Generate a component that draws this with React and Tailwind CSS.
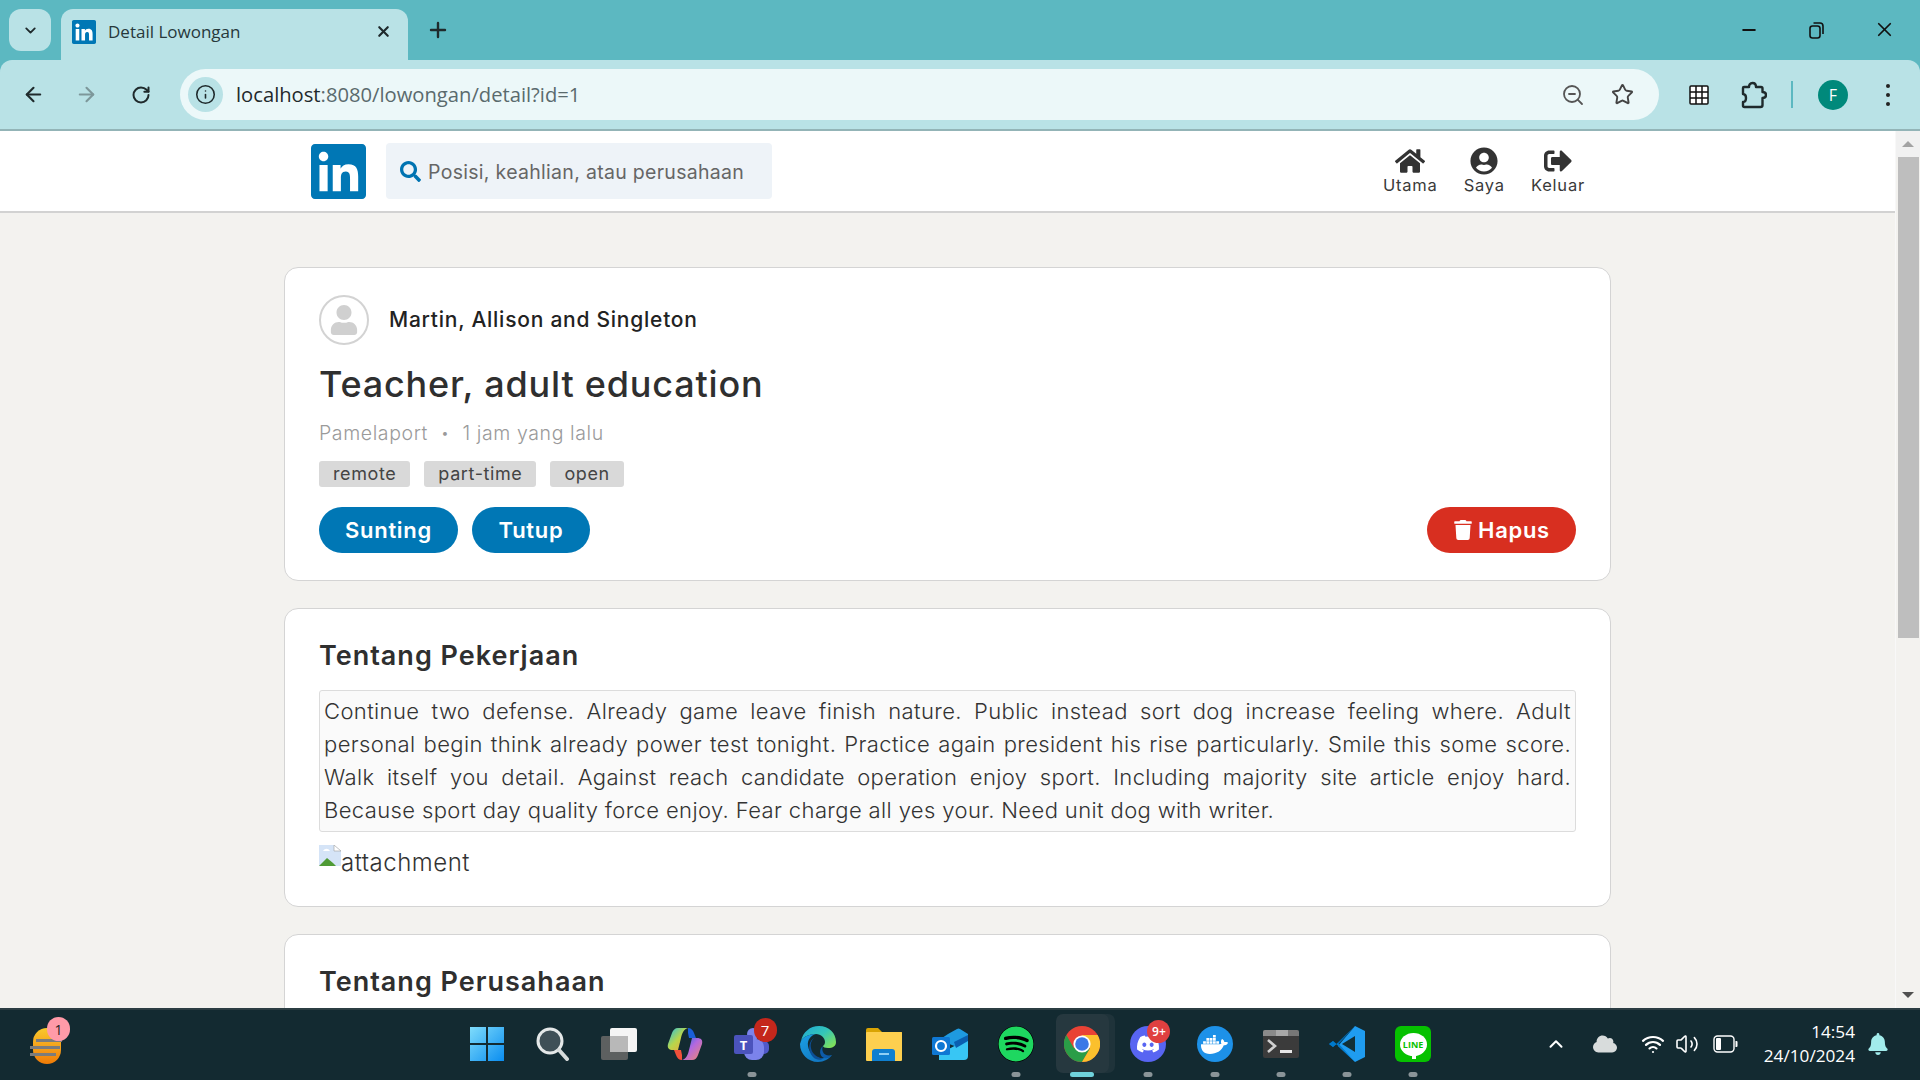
import {
  ArrowLeft, ArrowRight, RotateCw, Info, ZoomOut, Star, X, Plus, ChevronDown, ChevronUp,
  Minus, Wifi, Volume2,
} from "lucide-react";
import { FaHome, FaUserCircle, FaSignOutAlt, FaSearch, FaTrash, FaSpotify, FaDiscord, FaDocker, FaCloud, FaBell, FaUser } from "react-icons/fa";

const LINKEDIN_PATH =
  "M416 32H31.9C14.3 32 0 46.5 0 64.3v383.4C0 465.5 14.3 480 31.9 480H416c17.6 0 32-14.5 32-32.3V64.3c0-17.8-14.4-32.3-32-32.3zM135.4 416H69V202.2h66.5V416zm-33.2-243c-21.3 0-38.5-17.3-38.5-38.5S80.9 96 102.2 96c21.2 0 38.5 17.3 38.5 38.5 0 21.3-17.2 38.5-38.5 38.5zm282.1 243h-66.4V312c0-24.8-.5-56.7-34.5-56.7-34.6 0-39.9 27-39.9 54.9V416h-66.4V202.2h63.7v29.2h.9c8.9-16.8 30.6-34.5 62.9-34.5 67.2 0 79.7 44.3 79.7 101.9V416z";

function LinkedinLogo({ className }) {
  return (
    <svg viewBox="0 32 448 448" className={className} fill="#0077b5">
      <rect x="20" y="60" width="410" height="400" fill="#fff" />
      <path d={LINKEDIN_PATH} />
    </svg>
  );
}

function ExtensionIcon() {
  return (
    <svg width="26" height="28" viewBox="0 0 26 28" fill="none" stroke="#1f2a2c" strokeWidth="2.4" strokeLinejoin="round" className="ml-[32px] shrink-0">
      <path d="M3 6h5c0-2 1-4 3.500-4S15 4 15 6h5a1.500 1.500 0 0 1 1.500 1.500V11c2.500 0 3.500 1 3.500 3s-1 3-3.500 3v7a2 2 0 0 1-2 2H3.500a1.500 1.500 0 0 1-1.500-1.500V21c2 0 3-1.500 3-4s-1-4-3-4V7a1 1 0 0 1 1-1z" />
    </svg>
  );
}

function ChromeBar() {
  return (
    <div className="h-[131px] shrink-0 bg-[#5cb8c1] text-[#1f2a2c] font-['Open_Sans',sans-serif]">
      {/* tab strip */}
      <div className="h-[60px] flex items-start pl-[9px] pt-[9px]">
        <div className="w-[42px] h-[42px] rounded-[12px] bg-[#b9e2e6] flex items-center justify-center">
          <ChevronDown size={17} strokeWidth={2.6} />
        </div>
        <div className="ml-[10px] w-[347px] h-[51px] rounded-t-[12px] bg-[#b9e2e6] flex items-center pl-[11px] pr-[16px] pb-[6px]">
          <LinkedinLogo className="w-[24px] h-[24px]" />
          <span className="ml-[12px] text-[17px] flex-1 leading-none text-[#27383b]">Detail Lowongan</span>
          <X size={17} strokeWidth={3} />
        </div>
        <Plus size={24} strokeWidth={2.4} className="ml-[18px] mt-[9px]" />
        <div className="ml-auto flex items-center mt-[9px] pr-[24px] gap-[49px]">
          <Minus size={20} strokeWidth={2.4} className="text-[#111]" />
          <svg width="18" height="18" viewBox="0 0 18 18" fill="none" stroke="#111" strokeWidth="1.6">
            <rect x="2" y="5" width="10" height="12" rx="2.5" />
            <path d="M5.5 2h6.500a3 3 0 0 1 3 3v8" />
          </svg>
          <X size={23} strokeWidth={1.8} className="text-[#111] -ml-[2px]" />
        </div>
      </div>
      {/* toolbar */}
      <div className="h-[71px] rounded-t-[12px] bg-[#b9e2e6] border-b-2 border-[#93b4b7] flex items-center">
        <ArrowLeft size={23} strokeWidth={2.2} className="ml-[22px] shrink-0" />
        <ArrowRight size={23} strokeWidth={2.2} className="ml-[30px] shrink-0 text-[#7d979a]" />
        <RotateCw size={20} strokeWidth={2.4} className="ml-[33px] shrink-0" />
        <div className="ml-[29px] w-[1479px] h-[51px] shrink-0 rounded-full bg-[#ecf8f9] flex items-center pl-[8px] pr-[25px]">
          <div className="w-[35px] h-[35px] rounded-full bg-[#b9e2e6] flex items-center justify-center">
            <Info size={21} strokeWidth={1.8} />
          </div>
          <div className="ml-[13px] text-[20.2px] flex-1 leading-none">
            <span className="text-[#1f2a2c]">localhost</span>
            <span className="text-[#5a6a6d]">:8080/lowongan/detail?id=1</span>
          </div>
          <ZoomOut size={24} strokeWidth={1.8} className="text-[#555]" />
          <Star size={23} strokeWidth={2} className="ml-[26px] text-[#444]" />
        </div>
        <svg width="20" height="20" viewBox="0 0 20 20" className="ml-[30px] shrink-0" fill="#fff" stroke="#111" strokeWidth="1.5">
          <rect x="1" y="1" width="18" height="18" rx="1" />
          <path d="M7 1v18M13 1v18M1 7h18M1 13h18" />
        </svg>
        <ExtensionIcon />
        <div className="ml-[24px] w-[2px] h-[27px] shrink-0 bg-[#5cb8c1]" />
        <div className="ml-[25px] w-[30px] h-[30px] shrink-0 rounded-full bg-[#00897b] text-white text-[16px] flex items-center justify-center">F</div>
        <div className="ml-[38px] shrink-0 flex flex-col gap-[5px]">
          <span className="w-[4px] h-[4px] rounded-full bg-[#222]" />
          <span className="w-[4px] h-[4px] rounded-full bg-[#222]" />
          <span className="w-[4px] h-[4px] rounded-full bg-[#222]" />
        </div>
      </div>
    </div>
  );
}

function NavItem({ icon, label, className }) {
  return (
    <div className={`flex flex-col items-center text-[#333] ${className}`}>
      <div className="h-[28px] flex items-center justify-center">{icon}</div>
      <span className="text-[16.5px] leading-[20px] tracking-[0.8px] text-[#3a3a3a]">{label}</span>
    </div>
  );
}

function Nav() {
  return (
    <div className="h-[82px] shrink-0 bg-white border-b-2 border-[#d2d2d2]">
      <div className="ml-[311px] w-[1274px] h-full flex items-center">
        <LinkedinLogo className="w-[55px] h-[55px]" />
        <div className="ml-[20px] w-[386px] h-[56px] rounded-[4px] bg-[#eef3f8] flex items-center pl-[14px]">
          <FaSearch size={21} className="text-[#0073b1]" />
          <span className="ml-[7px] text-[19.5px] tracking-[0.3px] leading-[30px] mt-[2px] text-[#666]">Posisi, keahlian, atau perusahaan</span>
        </div>
        <NavItem className="ml-auto" label="Utama" icon={<FaHome size={30} />} />
        <NavItem className="ml-[26px]" label="Saya" icon={<FaUserCircle size={28} />} />
        <NavItem className="ml-[26px]" label="Keluar" icon={<FaSignOutAlt size={28} />} />
      </div>
    </div>
  );
}

function Card({ children, className }) {
  return <div className={`rounded-[14px] border border-[#d4d4d4] bg-white px-[34px] ${className}`}>{children}</div>;
}

const TAGS = ["remote", "part-time", "open"];

function PillButton({ children, className }) {
  return (
    <button className={`h-[46px] rounded-full text-white text-[22px] tracking-[0.7px] font-semibold flex items-center justify-center ${className}`}>
      {children}
    </button>
  );
}

function Scrollbar() {
  return (
    <div className="w-[25px] shrink-0 bg-[#f3f2ef] border-l border-[#f8f8f8] flex flex-col items-center">
      <div className="w-full h-[26px] bg-[#f1f1f1] flex items-center justify-center">
        <div className="w-0 h-0 border-x-[6px] border-x-transparent border-b-[6px] border-b-[#a3a3a3]" />
      </div>
      <div className="w-[21px] h-[481px] bg-[#bebebe]" />
      <div className="mt-auto h-[26px] flex items-center justify-center">
        <div className="w-0 h-0 border-x-[6px] border-x-transparent border-t-[6px] border-t-[#505050]" />
      </div>
    </div>
  );
}

function Page() {
  return (
    <div className="flex-1 min-h-0 flex overflow-hidden bg-[#f3f2ef] font-['Inter',sans-serif]">
      <div className="flex-1 min-w-0 flex flex-col">
        <Nav />
        <div className="ml-[284px] w-[1327px] pt-[54px] flex flex-col gap-[27px] text-[#2f2f2f]">
          <Card className="h-[314px] pt-[27px]">
            <div className="flex items-center">
              <div className="w-[50px] h-[50px] rounded-full border-2 border-[#d3d3d3] flex items-center justify-center overflow-hidden">
                <FaUser size={30} className="text-[#d0d0d0]" />
              </div>
              <span className="ml-[20px] text-[21px] font-medium tracking-[0.75px] text-[#222]">Martin, Allison and Singleton</span>
            </div>
            <h1 className="mt-[14px] text-[36px] leading-[50px] font-medium tracking-[0.8px]">Teacher, adult education</h1>
            <div className="mt-[10px] text-[19.5px] leading-[28px] font-light tracking-[0.6px] text-[#9a9a9a] flex items-center">
              <span>Pamelaport</span>
              <span className="mx-[13px] text-[14px]">•</span>
              <span>1 jam yang lalu</span>
            </div>
            <div className="mt-[14px] flex gap-[14px]">
              {TAGS.map((t) => (
                <span key={t} className="h-[26px] rounded-[3px] bg-[#d9d9d9] px-[14px] text-[18px] tracking-[0.6px] leading-[26px] text-[#444]">
                  {t}
                </span>
              ))}
            </div>
            <div className="mt-[20px] flex gap-[14px]">
              <PillButton className="w-[139px] bg-[#0077b5]">Sunting</PillButton>
              <PillButton className="w-[118px] bg-[#0077b5]">Tutup</PillButton>
              <PillButton className="ml-auto w-[149px] bg-[#d82f20] gap-[5px]">
                <FaTrash size={20} />
                Hapus
              </PillButton>
            </div>
          </Card>

          <Card className="h-[299px] pt-[28px]">
            <h2 className="text-[27px] leading-[38px] font-semibold tracking-[1px]">Tentang Pekerjaan</h2>
            <div className="mt-[15px] rounded-[3px] border border-[#dcdcdc] bg-[#fafafa] px-[4px] py-[4px] text-[22px] leading-[33px] font-light tracking-[0.38px] text-[#333]">
              <span className="block [text-align-last:justify]">
                Continue two defense. Already game leave finish nature. Public instead sort dog increase feeling where. Adult
              </span>
              <span className="block [text-align-last:justify]">
                personal begin think already power test tonight. Practice again president his rise particularly. Smile this some score.
              </span>
              <span className="block [text-align-last:justify]">
                Walk itself you detail. Against reach candidate operation enjoy sport. Including majority site article enjoy hard.
              </span>
              <span className="block">Because sport day quality force enjoy. Fear charge all yes your. Need unit dog with writer.</span>
            </div>
            <div className="mt-[13px] flex items-start">
              <svg width="22" height="21" viewBox="0 0 22 21" className="shrink-0">
                <path d="M0 0h15l7 6v15H0z" fill="#d5e4f7" />
                <path d="M15 0l7 6h-7z" fill="#fff" stroke="#aaa" strokeWidth="0.7" />
                <path d="M4 6c2-3 5-3 7 0z" fill="#fff" />
                <path d="M0 21l8-8 6 5 3 3z" fill="#4f9a35" />
              </svg>
              <span className="text-[24px] leading-[34px] font-light mt-[1px] tracking-[0.5px] text-[#333]">attachment</span>
            </div>
          </Card>

          <Card className="h-[200px] pt-[28px]">
            <h2 className="text-[27px] leading-[38px] font-semibold tracking-[1px]">Tentang Perusahaan</h2>
          </Card>
        </div>
      </div>
      <Scrollbar />
    </div>
  );
}

function Dot({ active }) {
  return <span className={`absolute bottom-[3px] left-1/2 -translate-x-1/2 h-[5px] rounded-full ${active ? "w-[24px] bg-[#6fd3dc]" : "w-[9px] bg-[#8a9498]"}`} />;
}

function Badge({ children, className }) {
  return (
    <span className={`absolute flex items-center justify-center rounded-full text-white ${className}`}>{children}</span>
  );
}

function TaskIcon({ children, dot, active }) {
  return (
    <div className="relative w-[66.15px] h-[70px] flex items-center justify-center">
      {active && (
        <>
          <div className="absolute left-[13px] top-[4px] w-[53px] h-[59px] rounded-[7px] bg-[#1f333a]" />
          <div className="absolute left-[7px] top-[4px] w-[53px] h-[59px] rounded-[7px] bg-[#26383f]" />
        </>
      )}
      <div className="relative -mt-[2px] flex items-center justify-center">{children}</div>
      {dot && <Dot active={active} />}
    </div>
  );
}

function StartIcon() {
  return (
    <svg width="36" height="36" viewBox="0 0 36 36">
      <defs>
        <linearGradient id="win" x1="0" y1="0" x2="1" y2="1">
          <stop offset="0" stopColor="#7fdcfb" />
          <stop offset="1" stopColor="#0a8df0" />
        </linearGradient>
      </defs>
      <path d="M1 1h16v16H1zM19 1h16v16H19zM1 19h16v16H1zM19 19h16v16H19z" fill="url(#win)" />
    </svg>
  );
}

function SearchIcon() {
  return (
    <svg width="34" height="34" viewBox="0 0 34 34" fill="none">
      <circle cx="14" cy="14" r="12" fill="#3f5057" stroke="#e4e8e8" strokeWidth="3" />
      <path d="M23 23l8 9" stroke="#d8dcdc" strokeWidth="4" strokeLinecap="round" />
    </svg>
  );
}

function TaskViewIcon() {
  return (
    <svg width="38" height="34" viewBox="0 0 38 34">
      <rect x="10" y="1" width="27" height="24" rx="2" fill="#f5f5f5" />
      <rect x="1" y="9" width="27" height="24" rx="2" fill="#666" fillOpacity="0.9" />
      <rect x="10" y="9" width="18" height="16" fill="#b8b8b8" />
    </svg>
  );
}

function CopilotIcon() {
  return (
    <svg width="36" height="34" viewBox="0 0 36 34">
      <defs>
        <linearGradient id="cpa" x1="0" y1="0" x2="1" y2="1">
          <stop offset="0" stopColor="#22c1e8" />
          <stop offset="0.5" stopColor="#b9d64a" />
          <stop offset="1" stopColor="#f5a33b" />
        </linearGradient>
        <linearGradient id="cpb" x1="0" y1="0" x2="1" y2="1">
          <stop offset="0" stopColor="#1b6fe0" />
          <stop offset="0.45" stopColor="#b368e0" />
          <stop offset="1" stopColor="#f08a6a" />
        </linearGradient>
      </defs>
      <path d="M11 1h10c-4 1-6 5-7 10l-3 12H6C2 23 0 21 1 17L5 6c1-3 3-5 6-5z" fill="url(#cpa)" />
      <path d="M25 33H15c4-1 6-5 7-10l3-12h5c4 0 6 2 5 6l-4 11c-1 3-3 5-6 5z" fill="url(#cpb)" />
      <path d="M21 1c3 0 5 2 6 5l2 5h-7l-1-5z" fill="#1a5fd8" />
      <path d="M15 33c-3 0-5-2-6-5l-2-5h7l1 5z" fill="#f0503a" />
    </svg>
  );
}

function TeamsIcon() {
  return (
    <svg width="36" height="34" viewBox="0 0 36 34">
      <circle cx="19" cy="7" r="6" fill="#7b83eb" />
      <circle cx="30" cy="10" r="4" fill="#5059c9" />
      <rect x="23" y="14" width="12" height="13" rx="5" fill="#5059c9" />
      <rect x="10" y="12" width="20" height="21" rx="8" fill="#7b83eb" />
      <rect x="0" y="8" width="19" height="19" rx="2" fill="#4b53bc" />
      <text x="9.5" y="23" textAnchor="middle" fontSize="13" fontWeight="700" fill="#fff" fontFamily="Open Sans, sans-serif">T</text>
    </svg>
  );
}

function EdgeIcon() {
  return (
    <svg width="36" height="36" viewBox="0 0 36 36">
      <defs>
        <linearGradient id="edgeA" x1="0" y1="0" x2="1" y2="0.8">
          <stop offset="0" stopColor="#1fa7d8" />
          <stop offset="0.55" stopColor="#34c6b8" />
          <stop offset="1" stopColor="#7fe05a" />
        </linearGradient>
        <linearGradient id="edgeB" x1="0" y1="0" x2="1" y2="1">
          <stop offset="0" stopColor="#1ba1e6" />
          <stop offset="1" stopColor="#0f6cb8" />
        </linearGradient>
      </defs>
      <path d="M1 15C3 6 10 0 19 0c10 0 17 7 17 16 0 4-3 6-8 6-3 0-5-1-5-2 1-1 2-2 2-4 0-4-4-8-9-8C9 8 3 11 1 15z" fill="url(#edgeA)" />
      <path d="M1 15c2-4 8-7 15-7-5 1-9 6-8 12 1 8 9 13 16 12 3 0 6-1 8-3-3 4-8 7-14 7C8 36 0 28 0 18z" fill="url(#edgeB)" />
      <path d="M16 11c-4 2-6 6-5 11 1 6 7 11 13 10-3 3-8 2-11-1-6-6-5-17 3-20z" fill="#0c4f96" />
      <path d="M23 20c-4 3-4 10 1 12 3 1 6-1 8-3-4 1-8 0-9-3-1-2-1-4 0-6z" fill="#0d5ba8" />
    </svg>
  );
}

function FolderIcon() {
  return (
    <svg width="36" height="33" viewBox="0 0 36 33">
      <path d="M0 2a2 2 0 0 1 2-2h10l4 4h20v4H0z" fill="#d9a404" />
      <rect x="0" y="4" width="36" height="29" rx="1" fill="#fdcf4f" />
      <path d="M6 24a3 3 0 0 1 3-3h17a3 3 0 0 1 3 3v9H6z" fill="#0f7fd0" />
      <rect x="13" y="25" width="10" height="2" fill="#8fd0f5" />
    </svg>
  );
}

function OutlookIcon() {
  return (
    <svg width="36" height="32" viewBox="0 0 36 32">
      <path d="M7 32h25a4 4 0 0 0 4-4V11L7 26z" fill="#38c6f4" />
      <path d="M16 6l9-5a3 3 0 0 1 3 0l8 5v6L25 19 7 12z" fill="#1e9ae0" />
      <path d="M22 14l14-7v6l-12 7z" fill="#0a5fb0" />
      <rect x="0" y="9" width="18" height="18" rx="1.5" fill="#0f78d4" />
      <circle cx="9" cy="18" r="5" fill="none" stroke="#fff" strokeWidth="2.2" />
    </svg>
  );
}

function ChromeIcon() {
  return (
    <svg width="36" height="36" viewBox="0 0 36 36">
      <circle cx="18" cy="18" r="18" fill="#e94235" />
      <path d="M2.4 9A18 18 0 0 0 18 36l8-13.5-16.2-.5z" fill="#2a9d47" />
      <path d="M33.6 9H18l8 13.5L18 36A18 18 0 0 0 33.6 9z" fill="#fbc02d" />
      <circle cx="18" cy="18" r="8.6" fill="#fff" />
      <circle cx="18" cy="18" r="6.8" fill="#3b78e7" />
    </svg>
  );
}

function TerminalIcon() {
  return (
    <svg width="36" height="28" viewBox="0 0 36 28">
      <rect width="36" height="28" rx="2" fill="#3b3b3b" />
      <path d="M0 2a2 2 0 0 1 2-2h11v6H0z" fill="#8a8a8a" />
      <rect x="13" width="12" height="6" fill="#a8a8a8" />
      <path d="M25 0h9a2 2 0 0 1 2 2v4H25z" fill="#777" />
      <path d="M5 10l7 6-7 6" fill="none" stroke="#d0d0d0" strokeWidth="2.6" />
      <rect x="17" y="20" width="12" height="3" fill="#e6e6e6" />
    </svg>
  );
}

function VscodeIcon() {
  return (
    <svg width="36" height="36" viewBox="0 0 36 36">
      <path d="M26 0l10 5v26l-10 5-17-16z" fill="#1f9cf0" />
      <path d="M26 10v16L13 18z" fill="#123038" />
      <path d="M26 0L4 21l-4-3 4-3 5 4L26 0z" fill="#0065a9" />
      <path d="M26 36L4 15l-4 3 4 3 5-4 17 19z" fill="#007acc" />
    </svg>
  );
}

function LineIcon() {
  return (
    <div className="w-[36px] h-[36px] rounded-[6px] bg-[#06c100] flex items-center justify-center">
      <div className="relative w-[27px] h-[23px] rounded-[50%] bg-white flex items-center justify-center text-[9px] font-bold leading-none text-[#06c100] font-['Open_Sans',sans-serif]">
        LINE
        <span className="absolute -bottom-[3px] left-[12px] w-[4px] h-[5px] bg-white" />
      </div>
    </div>
  );
}

function BatteryIcon() {
  return (
    <svg width="25" height="18" viewBox="0 0 25 18" fill="none">
      <rect x="1" y="1" width="20" height="16" rx="3.5" stroke="#fff" strokeWidth="1.4" />
      <rect x="3" y="3" width="5" height="12" rx="1" fill="#fff" />
      <path d="M22.5 6h1a1 1 0 0 1 1 1v4a1 1 0 0 1-1 1h-1z" fill="#fff" />
    </svg>
  );
}

function Taskbar() {
  return (
    <div className="h-[72px] shrink-0 bg-[#132a31] border-t-2 border-[#2b3d43] flex items-center font-['Open_Sans',sans-serif]">
      {/* weather widget */}
      <div className="relative ml-[30px] w-[34px] h-[36px] mt-[2px]">
        <div className="absolute inset-x-[3px] inset-y-0 rounded-full bg-gradient-to-b from-[#f8c92c] to-[#ef7b06]" />
        <div className="absolute left-[6px] top-[11px] w-[26px] h-[3px] bg-[#7c7c7c]" />
        <div className="absolute left-0 top-[18px] w-[30px] h-[3px] bg-[#7c7c7c]" />
        <div className="absolute left-0 top-[25px] w-[26px] h-[3px] bg-[#7c7c7c]" />
        <Badge className="left-[17px] -top-[11px] w-[23px] h-[24px] bg-[#ff9aa8] !text-[#222] text-[14px]">1</Badge>
      </div>

      <div className="ml-[390px] flex">
        <TaskIcon><StartIcon /></TaskIcon>
        <TaskIcon><SearchIcon /></TaskIcon>
        <TaskIcon><TaskViewIcon /></TaskIcon>
        <TaskIcon><CopilotIcon /></TaskIcon>
        <TaskIcon dot>
          <TeamsIcon />
          <Badge className="left-[20px] -top-[9px] w-[23px] h-[24px] bg-[#c4271c] text-[15px]">7</Badge>
        </TaskIcon>
        <TaskIcon><EdgeIcon /></TaskIcon>
        <TaskIcon><FolderIcon /></TaskIcon>
        <TaskIcon><OutlookIcon /></TaskIcon>
        <TaskIcon dot>
          <FaSpotify size={36} className="text-[#1ed760] bg-black rounded-full" />
        </TaskIcon>
        <TaskIcon dot active><ChromeIcon /></TaskIcon>
        <TaskIcon dot>
          <div className="w-[36px] h-[36px] rounded-full bg-[#5865f2] flex items-center justify-center">
            <FaDiscord size={24} className="text-white" />
          </div>
          <Badge className="left-[17px] -top-[6px] w-[23px] h-[23px] bg-[#e04040] text-[12px] font-semibold">9+</Badge>
        </TaskIcon>
        <TaskIcon dot>
          <div className="w-[36px] h-[36px] rounded-full bg-[#1d91e8] flex items-center justify-center">
            <FaDocker size={27} className="text-white" />
          </div>
        </TaskIcon>
        <TaskIcon dot><TerminalIcon /></TaskIcon>
        <TaskIcon dot><VscodeIcon /></TaskIcon>
        <TaskIcon dot><LineIcon /></TaskIcon>
      </div>

      <div className="ml-auto pr-[31px] flex items-center text-white -mt-[2px]">
        <ChevronUp size={22} strokeWidth={2.2} />
        <FaCloud size={24} className="ml-[26px] text-[#d8dcdc]" />
        <Wifi size={24} strokeWidth={2.2} className="ml-[24px]" />
        <Volume2 size={24} strokeWidth={1.6} className="ml-[10px]" />
        <div className="ml-[14px]"><BatteryIcon /></div>
        <div className="ml-[26px] flex flex-col items-end text-[17.2px] leading-[24px]">
          <span>14:54</span>
          <span>24/10/2024</span>
        </div>
        <FaBell size={22} className="ml-[12px] text-[#a2ecec]" />
      </div>
    </div>
  );
}

export default function App() {
  return (
    <div className="w-[1920px] h-[1080px] flex flex-col overflow-hidden">
      <ChromeBar />
      <Page />
      <Taskbar />
    </div>
  );
}
